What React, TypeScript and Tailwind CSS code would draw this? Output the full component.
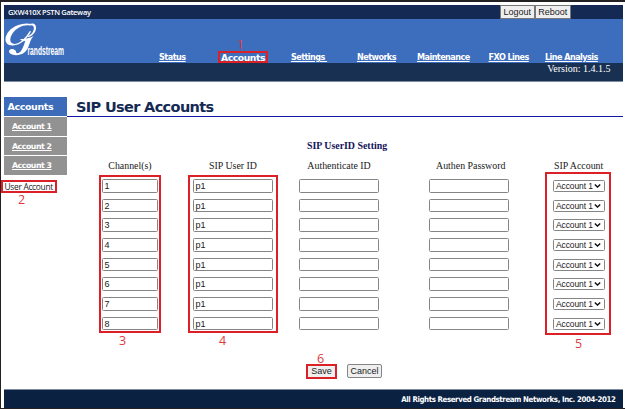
const rows = ['1', '2', '3', '4', '5', '6', '7', '8'];

const heading = "font-['DejaVu_Sans_Condensed','DejaVu_Sans',sans-serif] font-bold";
const wide = "font-['DejaVu_Sans',sans-serif] font-bold";
const sans = "font-['Liberation_Sans',sans-serif]";
const serif = "font-['Liberation_Serif',serif]";

function NavLink({ className, children }: { className: string; children: string }) {
  return (
    <a href="#" className={`shrink-0 whitespace-pre leading-[11px] underline ${className}`}>
      {children}
    </a>
  );
}

function Field({ value = '' }: { value?: string }) {
  return (
    <div className={`h-[13.5px] rounded-[1.5px] border border-[#858585] bg-white pl-[1.5px] text-[9px] leading-[12px] text-[#1a1a1a] ${sans}`}>
      {value}
    </div>
  );
}

function AccountSelect() {
  return (
    <div className={`mt-px flex h-[12px] items-center justify-between rounded-[1.5px] border border-[#858585] bg-white pr-[3px] pl-[2px] text-[8.5px] leading-[10px] tracking-[-0.1px] whitespace-nowrap text-[#1a1a1a] ${sans}`}>
      <span>Account 1</span>
      <svg className="h-[4px] w-[7px]" viewBox="0 0 7 4" fill="none">
        <path d="M0.8 0.6 3.5 3.1 6.2 0.6" stroke="#111" strokeWidth="1.4" />
      </svg>
    </div>
  );
}

function Mark({ className }: { className: string }) {
  return <div className={`absolute border-2 border-[#dc2028] ${className}`} />;
}

function Step({ className, children }: { className: string; children: string }) {
  return (
    <div className={`absolute font-['Open_Sans',sans-serif] text-[12.5px] leading-[12px] text-[#e03a3e] ${className}`}>
      {children}
    </div>
  );
}

function Logo() {
  return (
    <svg className="mt-[3px] ml-px h-[38px] w-[62px]" viewBox="0 0 62 38">
      <g fill="#fff">
        <path d="M26.5 2C18 0 7 4 2.500 11C-1.5 17.500 0.500 24 8 23.500C16 23 22 17 26 9.500L24.800 9C20.500 16 15 21.700 10 21.900C4.500 22 4 17 7.500 11.500C11.500 5.500 19 2.200 25 3.500Z" />
        <path d="M24.500 2.300C28 0.300 31.500 2.500 31 6.500C30.500 10.500 27.500 14 23 15.200L22.800 14.200C26.500 12.800 28.700 9.500 28.900 6.500C29 4 27.500 2.800 24.500 3.400Z" />
        <path d="M15.500 17C19 17.300 24 16.500 28.500 14C25.500 17.500 25 20.500 23.500 24.500C21.500 30 17 33.200 11 33.200C6.500 33.200 3.200 31 4.200 28.500C5.200 26.300 9 26.500 10.500 28.500C11.500 30 10.800 31.300 12.300 31.300C16 31 18 26.500 20.200 19C18.500 19 17 18.500 15.500 18Z" />
      </g>
      <text x="22.500" y="32.500" textLength="36.500" lengthAdjust="spacingAndGlyphs" fill="#fff" fontSize="13" fontWeight="bold" fontFamily="Liberation Sans, sans-serif">
        randstream
      </text>
    </svg>
  );
}

export default function App() {
  return (
    <div className="relative flex h-[409px] w-[625px] flex-col overflow-hidden border-t-2 border-b border-l border-[#242124] bg-white pt-[3px] pl-[3px]">
      <header className="w-[618.5px] text-white">
        <div className="flex h-[14px] bg-[#142a54]">
          <div className="w-[496px] pl-1 font-['Open_Sans',sans-serif] text-[7.5px] leading-[15px] font-semibold tracking-[-0.32px]">GXW410X PSTN Gateway</div>
          <button className={`h-[14px] w-[34.5px] border border-[#777] bg-[#efefef] text-[9px] leading-[12px] text-[#1a1a1a] ${sans}`}>Logout</button>
          <button className={`h-[14px] w-[36.5px] border border-[#777] bg-[#efefef] text-[9px] leading-[12px] text-[#1a1a1a] ${sans}`}>Reboot</button>
        </div>
        <div className="flex h-[44px] bg-[#3d6dbd]">
          <div className="w-[155px] shrink-0"><Logo /></div>
          <nav className={`flex items-end text-[8.1px] tracking-[-0.55px] ${wide}`}>
            <NavLink className="w-[61px] tracking-[-0.5px]">Status</NavLink>
            <NavLink className="w-[71px] pl-px text-[9.2px] no-underline tracking-[-0.4px]">Accounts</NavLink>
            <NavLink className="mr-[30px] w-[36px]">{'Settings '}</NavLink>
            <NavLink className="w-[60px]">Networks</NavLink>
            <NavLink className="w-[71.5px]">Maintenance</NavLink>
            <NavLink className="w-[56.5px]">FXO Lines</NavLink>
            <NavLink>Line Analysis</NavLink>
          </nav>
        </div>
        <div className={`h-[18.5px] border-b border-[#7d8aa0] bg-[#183052] pr-[12px] text-right text-[10px] leading-[12px] ${serif}`}>Version: 1.4.1.5</div>
      </header>

      <main className="mt-[15.5px] flex w-[618.5px] grow">
        <aside className="w-[63px] shrink-0">
          <div className={`h-[19px] bg-[#3b6bb9] pl-[3.5px] text-[9.5px] leading-[20px] tracking-[-0.4px] text-white ${wide}`}>Accounts</div>
          <div className={`mt-px flex flex-col gap-px text-[7.8px] leading-[19px] tracking-[-0.45px] text-white ${wide}`}>
            <a href="#" className="h-[18.5px] bg-[#929292] pl-2 underline">Account 1</a>
            <a href="#" className="h-[18.5px] bg-[#929292] pl-2 underline">Account 2</a>
            <a href="#" className="h-[18.5px] bg-[#929292] pl-2 underline">Account 3</a>
          </div>
          <div className="mt-[5px] ml-[0.5px] font-['Open_Sans',sans-serif] text-[8.4px] leading-[13px] tracking-[-0.3px] whitespace-nowrap text-[#222]">User Account</div>
        </aside>
        <section className="grow">
          <h1 className={`h-[20px] border-b border-[#1418a8] pl-[9px] text-[14.5px] leading-[20px] tracking-[-0.65px] text-[#142a54] ${wide}`}>SIP User Accounts</h1>
          <h2 className={`mt-[22px] pl-[240px] text-[9.9px] leading-[13px] font-bold text-[#14145c] ${serif}`}>SIP UserID Setting</h2>
          <div className={`mt-[7px] ml-[35px] grid grid-cols-[56px_80px_80px_80px_52px] gap-x-[35px] text-center text-[9.9px] leading-[13px] whitespace-nowrap text-[#1a1a1a] ${serif}`}>
            <span>Channel(s)</span>
            <span>SIP User ID</span>
            <span className="-ml-[18px]">Authenticate ID</span>
            <span className="ml-[13px]">Authen Password</span>
            <span className="ml-[16px]">SIP Account</span>
          </div>
          <div className="mt-[7px] ml-[35px] flex flex-col gap-[6.2px]">
            {rows.map((channel) => (
              <div key={channel} className="flex h-[13.5px]">
                <div className="mr-[35px] w-[56px]"><Field value={channel} /></div>
                <div className="mr-[26px] w-[80px]"><Field value="p1" /></div>
                <div className="mr-[50px] w-[80px]"><Field /></div>
                <div className="mr-[44px] w-[80px]"><Field /></div>
                <div className="w-[52px]"><AccountSelect /></div>
              </div>
            ))}
          </div>
          <div className="mt-[34px] ml-[240px] flex gap-[11px]">
            <button className={`h-[13.5px] w-[29px] bg-[#efefef] text-[9px] leading-[13px] text-[#1a1a1a] ${sans}`}>Save</button>
            <button className={`h-[13.5px] w-[35px] rounded-[2px] border border-[#858585] bg-[#efefef] text-[9px] leading-[12px] text-[#1a1a1a] ${sans}`}>Cancel</button>
          </div>
        </section>
      </main>

      <footer className={`h-[19px] w-[618.5px] shrink-0 border-t border-[#7d8aa0] bg-[#0b2142] pr-[7px] text-right text-[7.8px] leading-[19px] tracking-[-0.38px] text-white ${heading}`}>
        All Rights Reserved Grandstream Networks, Inc. 2004-2012
      </footer>

      <Mark className="top-[49px] left-[217px] h-[12px] w-[50px]" />
      <Mark className="top-[178px] left-0 h-[13px] w-[56px]" />
      <Mark className="top-[173px] left-[98px] h-[158px] w-[62px]" />
      <Mark className="top-[173px] left-[187px] h-[158px] w-[90px]" />
      <Mark className="top-[170px] left-[544px] h-[163px] w-[66px]" />
      <Mark className="top-[362px] left-[305px] h-[15px] w-[31px]" />
      <Step className="top-[37px] left-[236px]">1</Step>
      <Step className="top-[192px] left-[17px]">2</Step>
      <Step className="top-[333px] left-[118px]">3</Step>
      <Step className="top-[333px] left-[218px]">4</Step>
      <Step className="top-[336px] left-[574px]">5</Step>
      <Step className="top-[351px] left-[316px]">6</Step>
    </div>
  );
}
